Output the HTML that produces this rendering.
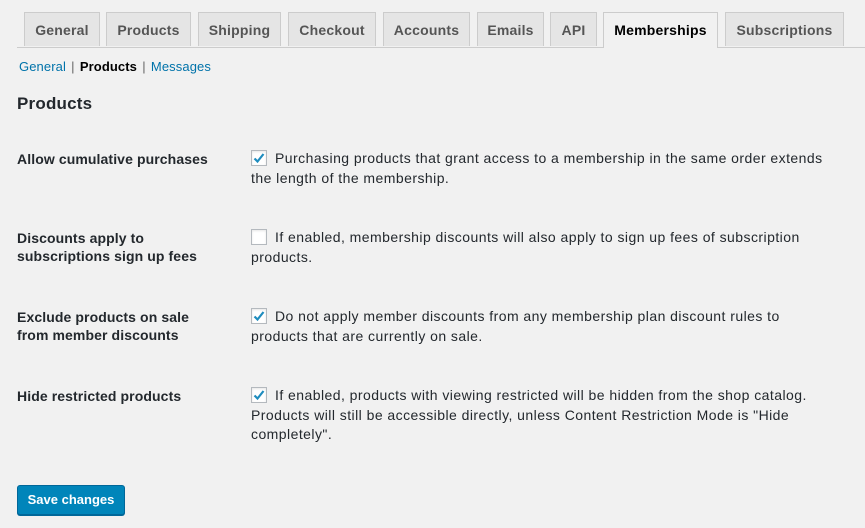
<!DOCTYPE html>
<html><head><style>
body{margin:0;background:#f1f1f1;font-family:"Liberation Sans",sans-serif;color:#23282d;font-size:14px;width:865px;height:528px;overflow:hidden;position:relative}
.tabs{position:absolute;top:12px;left:17px;right:0;height:35px;border-bottom:1px solid #ccc}
.tab{position:absolute;top:0;height:33px;background:#e5e5e5;border:1px solid #ccc;border-bottom:none;font-weight:bold;font-size:14px;color:#555;text-align:center;line-height:34px;letter-spacing:0.2px}
.tab.act{background:#f1f1f1;color:#000;height:35px}
.sub{position:absolute;top:59px;left:19px;font-size:13px;color:#666;letter-spacing:0.1px;word-spacing:1.5px}
.sub a{color:#0073aa;text-decoration:none}
.sub b{color:#000}
h2{position:absolute;top:94px;left:17px;margin:0;font-size:17px;font-weight:bold;color:#23282d;letter-spacing:0.2px}
.lbl{position:absolute;left:17px;font-weight:bold;font-size:14px;line-height:18px;width:220px;letter-spacing:0.1px}
.d{position:absolute;left:251px;width:578px;line-height:19.5px;text-indent:24px;letter-spacing:0.45px}
.cb{position:absolute;left:251px;width:14px;height:14px;border:1px solid #b4b9be;background:#fff;box-shadow:inset 0 1px 2px rgba(0,0,0,.1)}
.cb svg{position:absolute;left:0;top:0}
.btn{position:absolute;left:17px;top:485px;width:106px;height:28px;background:#0085ba;border:1px solid #006799;border-radius:3px;color:#fff;font-size:13px;font-weight:bold;line-height:28px;text-align:center;box-shadow:0 1px 0 #006799}
</style></head><body>
<div class="tabs">
<div class="tab" style="left:7px;width:74px">General</div>
<div class="tab" style="left:89px;width:83px">Products</div>
<div class="tab" style="left:181px;width:81px">Shipping</div>
<div class="tab" style="left:271px;width:86px">Checkout</div>
<div class="tab" style="left:366px;width:85px">Accounts</div>
<div class="tab" style="left:460px;width:65px">Emails</div>
<div class="tab" style="left:533px;width:45px">API</div>
<div class="tab act" style="left:586px;width:113px">Memberships</div>
<div class="tab" style="left:708px;width:117px">Subscriptions</div>
</div>
<div class="sub"><a>General</a> | <b>Products</b> | <a>Messages</a></div>
<h2>Products</h2>

<div class="lbl" style="top:150px">Allow cumulative purchases</div>
<div class="cb" style="top:150px"><svg width="14" height="14" viewBox="0 0 14 14"><path d="M2.5 7.5 L5.5 10.5 L11.5 3" fill="none" stroke="#1e8cbe" stroke-width="2.2"/></svg></div>
<div class="d" style="top:149px">Purchasing products that grant access to a membership in the same order extends the length of the membership.</div>

<div class="lbl" style="top:229px">Discounts apply to<br>subscriptions sign up fees</div>
<div class="cb" style="top:229px"></div>
<div class="d" style="top:228px">If enabled, membership discounts will also apply to sign up fees of subscription products.</div>

<div class="lbl" style="top:308px">Exclude products on sale<br>from member discounts</div>
<div class="cb" style="top:308px"><svg width="14" height="14" viewBox="0 0 14 14"><path d="M2.5 7.5 L5.5 10.5 L11.5 3" fill="none" stroke="#1e8cbe" stroke-width="2.2"/></svg></div>
<div class="d" style="top:307px">Do not apply member discounts from any membership plan discount rules to products that are currently on sale.</div>

<div class="lbl" style="top:387px">Hide restricted products</div>
<div class="cb" style="top:387px"><svg width="14" height="14" viewBox="0 0 14 14"><path d="M2.5 7.5 L5.5 10.5 L11.5 3" fill="none" stroke="#1e8cbe" stroke-width="2.2"/></svg></div>
<div class="d" style="top:386px">If enabled, products with viewing restricted will be hidden from the shop catalog. Products will still be accessible directly, unless Content Restriction Mode is "Hide completely".</div>

<div class="btn">Save changes</div>
</body></html>
